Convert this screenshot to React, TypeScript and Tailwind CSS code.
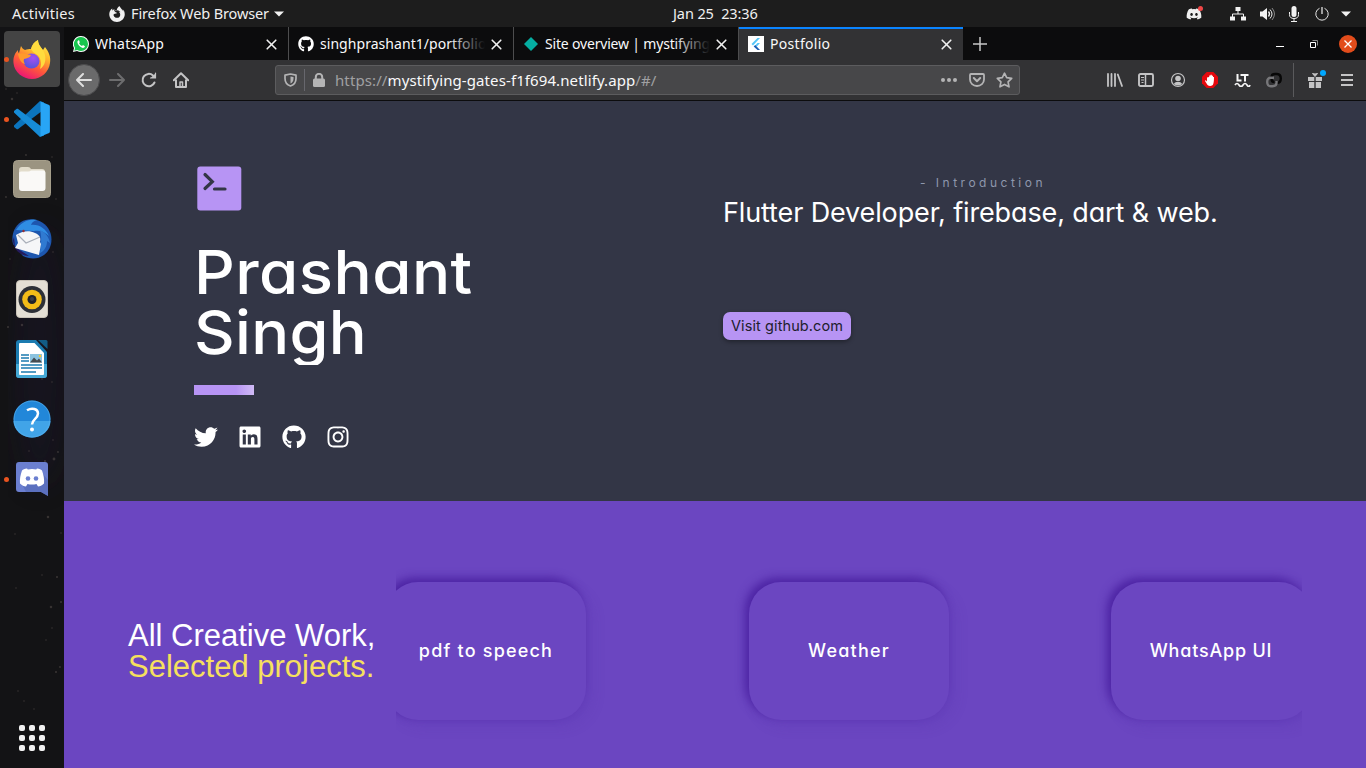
import React from "react";
import { FaGithub, FaInstagram, FaLinkedin, FaTwitter, FaDiscord } from "react-icons/fa";
import { SiFirefoxbrowser } from "react-icons/si";

type IconProps = { className?: string };

function CloseIcon({ className = "" }: IconProps) {
  return (
    <svg className={className} width="11" height="11" viewBox="0 0 11 11" stroke="currentColor" strokeWidth="1.6" strokeLinecap="round">
      <path d="M1.2 1.2l8.6 8.6M9.8 1.2L1.2 9.8" />
    </svg>
  );
}

function FirefoxLogo() {
  return (
    <svg width="38" height="39" viewBox="0 0 38 39">
      <defs>
        <linearGradient id="ffx" x1="0.8" y1="0" x2="0.3" y2="1">
          <stop offset="0" stopColor="#fff14a" />
          <stop offset="0.35" stopColor="#ffb52c" />
          <stop offset="0.65" stopColor="#ff5a3a" />
          <stop offset="1" stopColor="#ea1178" />
        </linearGradient>
        <radialGradient id="ffg" cx="0.6" cy="0.3" r="0.8">
          <stop offset="0" stopColor="#a64ff0" />
          <stop offset="1" stopColor="#4a56d8" />
        </radialGradient>
      </defs>
      <path d="M8 6c1 2 2 3 4 4 2-1 4-1 6-1 1-4 3-7 7-9 0 5 3 7 5 10l2-3c4 5 6 10 5 16-1 9-9 16-18 16S1 32 .5 23C0 17 2 13 5 10c0 2 0 2 1 3z" fill="url(#ffx)" />
      <path d="M18 9c1-4 3-7 7-9 0 5 4 8 6 12 3 7 1 14-4 17 2-6 1-12-4-15-2-1-4-3-5-5z" fill="#ffdc3e" />
      <ellipse cx="18.500" cy="21" rx="8" ry="7.500" fill="url(#ffg)" />
      <path d="M5 14c4-2 9 0 13 1-1 3-4 3-7 4-1 2 0 3 1 5-4-1-6-5-7-10z" fill="#ff9a2b" />
    </svg>
  );
}

function VsCodeLogo() {
  return (
    <svg width="36" height="36" viewBox="0 0 36 36">
      <path d="M26 0L0 24.5c-.4.5-.3 1 0 1.500L2.500 28c.5.400 1 .4 1.600 0L30 8.500V1.500z" fill="#0b74bd" />
      <path d="M26 36L0 11.500c-.4-.5-.3-1 0-1.500L2.500 8c.5-.4 1-.4 1.600 0L30 27.500v7z" fill="#168bd6" />
      <path d="M26.500 35.600V.4l8 3.300c1 .4 1.400 1 1.400 2v24.600c0 1-.4 1.600-1.400 2z" fill="#28a5f5" />
    </svg>
  );
}

function FilesLogo() {
  return (
    <svg width="38" height="38" viewBox="0 0 38 38">
      <rect x=".5" y=".5" width="37" height="37" rx="4" fill="#9b9481" stroke="#a59e8a" />
      <path d="M6 10q0-3 3-3h6q2 0 3 2h11q3 0 3 3v8H6z" fill="#e2dccb" />
      <path d="M6 13q0-1.500 2-1.500h7q2 0 3-1h12q2.500 0 2.500 2.500v15q0 3-3 3h-20.500q-3 0-3-3z" fill="#faf9f7" />
    </svg>
  );
}

function ThunderbirdLogo() {
  return (
    <svg width="40" height="40" viewBox="0 0 40 40">
      <path d="M9 3C17-2 30 0 36 9c6 9 4 21-4 27-7 5-15 4-21 1L1 25C-1 16 2 8 9 3z" fill="#1d56ae" />
      <path d="M4 11C9 3 18-1 25 1c-3 1-5 2-6 5 8-1 15 4 18 11-5-5-10-6-15-5z" fill="#2f8de4" />
      <path d="M28 11c5 2 9 7 10 13l-3-2c0 6-3 10-7 12 1-8 2-15 0-23z" fill="#307ad1" />
      <path d="M2 18L3 28l14 9c-9 0-16-7-16-16z" fill="#241a5c" />
      <path d="M4 16c6-4 13-5 19-2 5 2 6 5 5 9l1 2-2 11L3 29l3-5z" fill="#f5f6f8" />
      <path d="M6 16l8 8 14-6" stroke="#a9afb9" strokeWidth="1.200" fill="none" />
      <circle cx="11.500" cy="12" r="1.200" fill="#9b3030" />
    </svg>
  );
}

function RhythmboxLogo() {
  return (
    <svg width="32" height="38" viewBox="0 0 32 38">
      <rect x=".5" y=".5" width="31" height="37" rx="3.500" fill="#e4dfd5" stroke="#c9c3b8" />
      <circle cx="16" cy="19.500" r="13.500" fill="#2d3037" />
      <circle cx="16" cy="19.500" r="9.800" fill="#f4bd18" />
      <circle cx="16" cy="19.500" r="4.500" fill="#20232a" />
      <circle cx="16" cy="19" r="2" fill="#3a3e48" />
    </svg>
  );
}

function WriterLogo() {
  return (
    <svg width="32" height="38" viewBox="0 0 32 38">
      <path d="M3 0h17l11 12v23q0 3-3 3H3q-3 0-3-3V3q0-3 3-3z" fill="#1b7bb0" />
      <path d="M0 24h31v11q0 3-3 3H3q-3 0-3-3z" fill="#45a9d6" />
      <path d="M22 0h8q1.500 0 1.500 1.500V9z" fill="#125c86" />
      <path d="M3 4q0-1 1-1h14.500L28 13v21q0 1-1 1H4q-1 0-1-1z" fill="#fff" />
      <path d="M5 15h8M5 18h8M5 21h8M5 25h21M5 28h21M5 32h15" stroke="#1b7bb0" strokeWidth="1.400" />
      <rect x="14" y="14" width="12" height="8.500" fill="#8bc3df" />
      <path d="M14 22.500l4-5 3 3 2-2 3 4z" fill="#454b50" />
      <circle cx="24" cy="16" r="1.200" fill="#f5c930" />
    </svg>
  );
}

function HelpLogo() {
  return (
    <svg width="38" height="38" viewBox="0 0 38 38">
      <circle cx="19" cy="19" r="18.500" fill="#2287d9" />
      <path d="M.5 21h37a18.500 16.500 0 0 1-37 0z" fill="#41a4e8" />
      <circle cx="19" cy="19" r="18" fill="none" stroke="#5bb3ec" strokeOpacity=".6" />
      <path d="M14 10.300c5-3 11-1.500 11 3.300 0 5-6 5.500-6 11" fill="none" stroke="#fff" strokeWidth="2.500" />
      <circle cx="19" cy="29.500" r="2" fill="#fff" />
    </svg>
  );
}

function DiscordLogo() {
  return (
    <svg width="32" height="35" viewBox="0 0 32 35">
      <path d="M3 0h26q3 0 3 3v31l-7-4H3q-3 0-3-3V3q0-3 3-3z" fill="#6b7fd0" />
      <path d="M6 22l4 8h15l7 4V18L27 12z" fill="#5469b8" opacity=".7" />
      <path d="M11 6.500c-2.500 0-4 1-5 2-1.500 4-2.500 9-2 13 2 2 4 3 6 3l1.500-2.500q4.500 1 9 0L22 24.500c2 0 4-1 6-3 .5-4-.5-9-2-13-1-1-2.500-2-5-2l-.8 1q-4.200-.8-8.400 0z" fill="#fff" />
      <circle cx="12" cy="16.500" r="2.300" fill="#6b7fd0" />
      <circle cx="20" cy="16.500" r="2.300" fill="#6b7fd0" />
    </svg>
  );
}

function DockItem({ children, running = false, active = false }: { children: React.ReactNode; running?: boolean; active?: boolean }) {
  return (
    <div className="relative flex h-[60px] w-16 items-center justify-center">
      {running && <span className="absolute left-1 top-[27.5px] z-10 size-[5px] rounded-full bg-[#e95420]" />}
      <div className={active ? "flex size-14 items-center justify-center rounded-[4px] bg-[#444444]" : "flex size-14 items-center justify-center"}>{children}</div>
    </div>
  );
}

const stars = [
  [27, 6, 1.2], [6, 62, 1], [12, 72, 1.6], [17, 66, 1], [52, 130, 1], [26, 128, 1.2], [6, 170, 1.2], [56, 172, 1], [10, 232, 1],
  [53, 225, 1], [8, 300, 1.4], [22, 298, 1.6], [52, 355, 1], [42, 352, 1], [53, 413, 1], [58, 425, 1.2], [45, 434, 1.4], [54, 432, 1.8], [29, 424, 1],
  [48, 490, 1.6], [15, 507, 1], [61, 506, 1], [57, 550, 1.4], [42, 548, 1], [16, 561, 1], [61, 575, 1.4], [51, 580, 1.6], [52, 601, 1], [46, 613, 1],
  [60, 640, 1.2], [56, 645, 1.4], [18, 664, 1], [24, 674, 1], [34, 682, 1],
];

function Dock() {
  return (
    <aside className="relative flex w-16 shrink-0 flex-col overflow-hidden bg-[#131315] pt-[2px]">
      <svg className="absolute left-0 top-0" width="64" height="741">
        <defs>
          <filter id="haze"><feGaussianBlur stdDeviation="14" /></filter>
        </defs>
        <ellipse cx="40" cy="330" rx="26" ry="130" fill="#1a1830" opacity=".35" filter="url(#haze)" />
        {stars.map(([x, y, r]) => (
          <circle key={`${x}-${y}`} cx={x} cy={y} r={r * 0.8} fill="#6d6460" opacity=".4" />
        ))}
      </svg>
      <DockItem running active><FirefoxLogo /></DockItem>
      <DockItem running><VsCodeLogo /></DockItem>
      <DockItem><FilesLogo /></DockItem>
      <DockItem><ThunderbirdLogo /></DockItem>
      <DockItem><RhythmboxLogo /></DockItem>
      <DockItem><WriterLogo /></DockItem>
      <DockItem><HelpLogo /></DockItem>
      <DockItem running><DiscordLogo /></DockItem>
      <div className="relative mt-auto mb-[17px] ml-[19px] grid w-[26px] grid-cols-3 gap-[4px]">
        {[0, 1, 2, 3, 4, 5, 6, 7, 8].map((i) => (
          <span key={i} className="size-[6px] rounded-[2px] bg-[#f2f2f2]" />
        ))}
      </div>
    </aside>
  );
}

function SystemBar() {
  return (
    <header className="flex h-[27px] shrink-0 items-center bg-[#1d1d1d] text-[14.5px] leading-[27px] text-[#f0f0f0]">
      <div className="flex w-[673px] items-center pl-3">
        <span className="w-[97px] tracking-[0.25px]">Activities</span>
        <SiFirefoxbrowser className="size-4" />
        <span className="ml-[6px] w-[139px] whitespace-nowrap tracking-[-0.12px]">Firefox Web Browser</span>
        <svg className="ml-1" width="10" height="6" viewBox="0 0 10 6"><path d="M0 .5h10L5 5.500z" fill="#f2f2f2" /></svg>
      </div>
      <div className="whitespace-pre tracking-[-0.1px]">Jan 25  23:36</div>
      <div className="ml-auto flex items-center justify-end pr-[15px]">
        <span className="relative mr-[28px]">
          <FaDiscord className="size-4" />
          <span className="absolute -right-[1px] top-0 size-[5px] rounded-full bg-[#f04747]" />
        </span>
        <svg className="mr-[14px]" width="16" height="14" viewBox="0 0 16 14" fill="#f2f2f2">
          <path d="M5.500 0h5v4h-5zM0 9.500h5v4H0zM11 9.500h5v4h-5z" />
          <path d="M8 4v3M2.500 10V7h11v3" stroke="#f2f2f2" fill="none" />
        </svg>
        <svg className="mr-[14px]" width="15" height="14" viewBox="0 0 15 14" fill="none" stroke="#f2f2f2">
          <path d="M0 4.500h2.500L7 1v12L2.500 9.500H0z" fill="#f2f2f2" stroke="none" />
          <path d="M8.500 4.500q2 2.500 0 5" strokeWidth="1.300" /><path d="M10 2.500q4 4.500 0 9" /><path d="M12 1q5 6 0 12" strokeOpacity=".5" />
        </svg>
        <svg className="mr-[16px]" width="10" height="16" viewBox="0 0 10 16" fill="none" stroke="#f2f2f2">
          <rect x="2.500" y="0" width="5" height="11" rx="2.500" fill="#f2f2f2" stroke="none" />
          <path d="M.5 6v2.500q0 4 4.500 4t4.500-4V6M5 12.500V15M2 15.500h6" />
        </svg>
        <svg className="mr-3" width="14" height="14" viewBox="0 0 14 14" fill="none" stroke="#e4e4e4">
          <path d="M4.500 1.300a6.200 6.200 0 1 0 5 0" /><path d="M7 0v7" strokeWidth="1.300" />
        </svg>
        <svg width="10" height="6" viewBox="0 0 10 6"><path d="M0 .5h10L5 5.500z" fill="#f2f2f2" /></svg>
      </div>
    </header>
  );
}

function Tab({ icon, title, faded = false, active = false, titleClass = "" }: { icon: React.ReactNode; title: string; faded?: boolean; active?: boolean; titleClass?: string }) {
  return (
    <div className={active ? "flex h-[33px] w-[224px] items-center border-t-2 border-[#0a84ff] bg-[#323234] pb-[1px] pl-[9px]" : "flex h-[33px] w-[225px] items-center border-r border-[#4d4d4e] pb-[1px] pl-[9px] pt-[2px]"}>
      <span className="flex size-4 shrink-0 items-center justify-center">{icon}</span>
      <span className={`relative ml-[6px] w-[165px] overflow-hidden whitespace-nowrap text-[14px] leading-5 text-[#f9f9fa] ${titleClass}`}>
        {title}
        {faded && <span className="absolute right-0 top-0 h-5 w-9 bg-gradient-to-r from-transparent to-[#0c0c0d]" />}
      </span>
      <CloseIcon className="ml-[5.5px] shrink-0 text-[#f0f0f0]" />
    </div>
  );
}

function TabStrip() {
  return (
    <div className="flex h-[33px] shrink-0 items-center bg-[#0c0c0d]">
      <Tab
        title="WhatsApp"
        titleClass="tracking-[0.2px]"
        icon={
          <svg width="16" height="16" viewBox="0 0 16 16">
            <path d="M8 0a8 8 0 0 1 0 16q-2 0-4-1L0 16l1-4A8 8 0 0 1 8 0z" fill="#fff" />
            <path d="M8 1a7 7 0 0 1 0 14q-2 0-3.800-1l-2.900.8.8-2.900A7 7 0 0 1 8 1z" fill="#18c54e" />
            <path d="M5.500 4.200q-1.700 1-1 2.800c1 2.700 3 4.300 5.300 4.900q1.900.1 2.200-1.700l-2-1.100-1 1Q7 9.300 6 7.300l.8-1.100-.8-2z" fill="#fff" />
          </svg>
        }
      />
      <Tab title="singhprashant1/portfolio" faded titleClass="tracking-[0.05px]" icon={<FaGithub className="size-4 text-white" />} />
      <Tab
        title="Site overview | mystifying-gates"
        faded
        titleClass="tracking-[-0.18px]"
        icon={<svg width="16" height="16" viewBox="0 0 16 16"><path d="M8 1l7 7-7 7-7-7z" fill="#05ada1" /></svg>}
      />
      <Tab
        active
        title="Postfolio"
        titleClass="tracking-[0.3px]"
        icon={
          <svg width="16" height="16" viewBox="0 0 16 16">
            <path d="M0 0h16v16H0z" fill="#fff" />
            <path d="M9.500 2H12L5 9.500 3.500 8z" fill="#54c5f8" /><path d="M9.500 7H12l-3.200 3.400L7 9.800z" fill="#54c5f8" />
            <path d="M5.700 10.500L7.200 9l4.800 5H9.500z" fill="#1a5cb5" />
          </svg>
        }
      />
      <svg className="ml-[10px]" width="14" height="14" viewBox="0 0 14 14"><path d="M7 0v14M0 7h14" stroke="#c7c7c8" strokeWidth="1.500" /></svg>
      <div className="ml-auto flex items-center pr-[9px]">
        <span className="mr-[26px] mt-[5px] h-[1px] w-2 bg-white" />
        <svg className="mr-[21px]" width="8" height="8" viewBox="0 0 8 8" fill="none"><path d="M.5 2.500h5v5h-5z" stroke="#fff" /><path d="M2.500.5h5v5" stroke="#8a8a8a" /></svg>
        <span className="flex size-[18px] items-center justify-center rounded-full bg-[#e24c1b] text-white">
          <svg width="8" height="8" viewBox="0 0 8 8"><path d="M.5.5l7 7M7.500.5l-7 7" stroke="#fff" strokeWidth="1.300" /></svg>
        </span>
      </div>
    </div>
  );
}

function NavBar() {
  return (
    <div className="flex h-[41px] shrink-0 items-center border-b border-[#0c0c0d] bg-[#323234] text-[#c4c4c5]">
      <span className="ml-1 flex size-8 items-center justify-center rounded-full border border-[#4a4a4c] bg-[#6a6a6b]">
        <svg width="16" height="14" viewBox="0 0 16 14" fill="none" stroke="#dedede" strokeWidth="2" strokeLinecap="round" strokeLinejoin="round"><path d="M15 7H1M7 1L1 7l6 6" /></svg>
      </span>
      <svg className="ml-[9px]" width="16" height="14" viewBox="0 0 16 14" fill="none" stroke="#6d6d6e" strokeWidth="2" strokeLinecap="round" strokeLinejoin="round"><path d="M1 7h14M9 1l6 6-6 6" /></svg>
      <svg className="ml-4" width="16" height="16" viewBox="0 0 16 16" fill="none" stroke="currentColor" strokeWidth="2" strokeLinecap="round"><path d="M13.500 10.500A6.200 6.200 0 1 1 12 3.500l1.500 1.500" /><path d="M9.500 6H15V1z" fill="currentColor" stroke="none" /><path d="M14.500 1v5h-5" strokeWidth="1.200" /></svg>
      <svg className="ml-4" width="16" height="16" viewBox="0 0 16 16" fill="none" stroke="currentColor" strokeWidth="2" strokeLinejoin="round"><path d="M.8 8.300L8 1.200l7.200 7.100" strokeLinecap="round" /><path d="M3 7.500V15h10V7.500" /><path d="M7 15v-5h2.500v5" strokeWidth="1.500" /></svg>
      <div className="ml-[86px] flex h-[30px] w-[745px] items-center rounded-[3px] border border-[#5c5c5e] bg-[#474749]">
        <svg className="ml-2" width="13" height="14" viewBox="0 0 13 14" fill="none"><path d="M6.500 1l5.500 1.200v3.300c0 4-2.500 6.500-5.500 7.500C3.500 12 1 9.500 1 5.500V2.200z" stroke="#b4b4b5" strokeWidth="1.700" strokeLinejoin="round" /><path d="M6.500 3.500v7c2-1 3-2.500 3-5V4z" fill="#b4b4b5" /></svg>
        <span className="ml-[7px] h-[22px] w-px bg-[#67676d]" />
        <svg className="ml-2" width="12" height="14" viewBox="0 0 12 14"><path d="M0 7q0-1.500 1.500-1.500h9Q12 5.500 12 7v5.500q0 1.500-1.500 1.500h-9Q0 14 0 12.500z" fill="#b4b4b5" /><path d="M2.800 6V4a3.200 3.200 0 0 1 6.400 0v2" fill="none" stroke="#b4b4b5" strokeWidth="2" /></svg>
        <span className="ml-[10px] whitespace-nowrap text-[15px] leading-5 tracking-[0.1px] text-[#a0a0a2]">
          https://<span className="text-[#f9f9fa]">mystifying-gates-f1f694.netlify.app</span>/#/
        </span>
        <svg className="ml-auto" width="16" height="4" viewBox="0 0 16 4" fill="#b4b4b5"><circle cx="2" cy="2" r="2" /><circle cx="8" cy="2" r="2" /><circle cx="14" cy="2" r="2" /></svg>
        <svg className="ml-3" width="16" height="14" viewBox="0 0 16 14" fill="none" stroke="#b4b4b5" strokeLinecap="round" strokeLinejoin="round"><path d="M2 1h12q1 0 1 1v4.500a7 6.500 0 0 1-14 0V2q0-1 1-1z" strokeWidth="1.800" /><path d="M4.800 5L8 8.200 11.200 5" strokeWidth="2" /></svg>
        <svg className="ml-[11px] mr-[6px]" width="17" height="16" viewBox="0 0 17 16" fill="none" stroke="#b4b4b5" strokeWidth="1.700" strokeLinejoin="round"><path d="M8.500 1.200l2.200 4.500 5 .7-3.600 3.400.9 5-4.500-2.400L4 14.800l.9-5L1.300 6.400l5-.7z" /></svg>
      </div>
      <div className="ml-auto flex items-center">
        <svg width="16" height="14" viewBox="0 0 16 14" stroke="currentColor" strokeWidth="1.800" strokeLinecap="round"><path d="M1 1v12M4.500 1v12M8 1v12M10.800 1.500L15 13" /></svg>
        <svg className="ml-[15px]" width="16" height="14" viewBox="0 0 16 14" fill="none" stroke="currentColor"><rect x="1" y="1" width="14" height="12" rx="1.500" strokeWidth="1.900" /><path d="M7.500 1v12" strokeWidth="1.500" /><path d="M3 4.500h3M3 7h3M3.500 9.500h2" /></svg>
        <svg className="ml-4" width="16" height="16" viewBox="0 0 16 16" fill="none" stroke="currentColor"><circle cx="8" cy="8" r="6.500" strokeWidth="1.200" /><circle cx="8" cy="6.500" r="2.800" fill="currentColor" stroke="none" /><path d="M3.800 12q1.200-2 2.700-2h3q1.500 0 2.700 2-4.200 3-8.400 0z" fill="currentColor" stroke="none" /></svg>
        <svg className="ml-4" width="16" height="16" viewBox="0 0 16 16"><path d="M4.700 0h6.600L16 4.700v6.600L11.300 16H4.700L0 11.300V4.700z" fill="#e5080d" /><path d="M5 5.500v4L4 8.500q-1-.5-1 .5l2.500 4Q8 15 10.800 13q1.200-2 1.200-8h-1v2.500V3.700h-1.200V7 2.700H8.500V7 3.500H7.200v4V5z" fill="#fff" /></svg>
        <svg className="ml-4" width="17" height="14" viewBox="0 0 17 14" fill="none" stroke="#f6f6f6" strokeWidth="2"><path d="M3.500 1v6.500h4M6.500 2h8M11 1v7.500" /><path d="M1 12q2-3 4 0t4 0 4 0 3 0" strokeWidth="1.700" /></svg>
        <svg className="ml-[15px]" width="16" height="16" viewBox="0 0 16 16" fill="none" strokeWidth="2.400"><path d="M9 10.800h2q3.800 0 3.800-4.300T11 2H9Q5.500 2 5.500 5v2q0 3 3 3" stroke="#070707" /><path d="M8 5.700H5q-3.800 0-3.800 4.300T5 14.200h1.500Q10.500 14 10.500 11V9" stroke="#77777a" /></svg>
        <span className="ml-[11px] h-[34px] w-px bg-[#5a5a5c]" />
        <span className="relative ml-[14px]">
          <svg width="14" height="16" viewBox="0 0 14 16" fill="currentColor"><path d="M0 5h6.300v4H0zM7.700 5H14v4H7.700zM1 10h5.300v6H1zM7.700 10H13v6H7.700z" /><path d="M7 4.500L4.500 1.500 7 2l2.500-.5z" stroke="currentColor" /></svg>
          <span className="absolute -right-[4px] -top-[2px] size-[6px] rounded-full bg-[#00a8ff]" />
        </span>
        <svg className="ml-[19px] mr-[13px]" width="12" height="12" viewBox="0 0 12 12" stroke="currentColor" strokeWidth="2"><path d="M0 1h12M0 6h12M0 11h12" /></svg>
      </div>
    </div>
  );
}

function Intro() {
  return (
    <section className="flex h-[400px] shrink-0 bg-[#333646] pt-[65px] text-white [font-feature-settings:'cv11']">
      <div className="ml-[130px] w-[529px]">
        <svg className="ml-[3px]" width="45" height="45" viewBox="0 0 45 45">
          <rect x=".3" y=".5" width="44" height="44" rx="3" fill="#b794f4" />
          <path d="M8 8.500l7.300 7.200L8 22.500M17.500 23h10.500" fill="none" stroke="#333646" strokeWidth="3.200" strokeLinecap="round" />
        </svg>
        <h1 className="mt-[31px] h-[123px] overflow-hidden font-['Inter'] text-[60px] font-medium leading-[60px]">
          <span className="block w-[300px] origin-left scale-x-[1.06] tracking-[0.4px]">Prashant</span>
          <span className="block w-[300px] origin-left scale-x-[1.05] tracking-[0.3px]">Singh</span>
        </h1>
        <div className="mt-5 h-[10px] w-[60px] bg-gradient-to-r from-[#b794f4] from-70% to-[#d0bbf5]" />
        <div className="mt-[30px] flex items-center gap-5">
          <FaTwitter className="size-6" />
          <FaLinkedin className="size-6" />
          <FaGithub className="size-6" />
          <FaInstagram className="size-6" />
        </div>
      </div>
      <div className="w-[520px] pt-[8px] font-['Inter']">
        <p className="text-center text-[12px] leading-[18px] tracking-[3.5px] text-[#8f98ad]">- Introduction</p>
        <h2 className="whitespace-nowrap text-[27px] font-normal leading-[41px] tracking-[-0.13px]">Flutter Developer, firebase, dart &amp; web.</h2>
        <button className="mt-[79px] h-7 w-[128px] whitespace-nowrap rounded-[7px] bg-[#b794f4] text-[14.5px] leading-7 tracking-[0.1px] text-[#20202c] shadow-[0_2px_4px_rgba(0,0,0,0.35)]">Visit github.com</button>
      </div>
    </section>
  );
}

function ProjectCard({ title, titleClass }: { title: string; titleClass: string }) {
  return (
    <div className="flex h-[138px] w-[200px] shrink-0 items-center justify-center rounded-[32px] bg-[#6b46c1] pb-[1px] shadow-[-4px_-4px_10px_#4c23a3,6px_6px_14px_rgba(83,49,170,0.2)]">
      <span className={`whitespace-nowrap font-['Inter'] text-[18px] font-medium text-white [font-feature-settings:'cv11'] ${titleClass}`}>{title}</span>
    </div>
  );
}

function Projects() {
  return (
    <section className="flex flex-1 bg-[#6b46c1]">
      <h2 className="ml-16 mt-[119px] w-[268px] shrink-0 whitespace-nowrap font-['Liberation_Sans'] text-[31px] leading-[31px] text-white">
        All Creative Work,
        <span className="block text-[#f6e05e]">Selected projects.</span>
      </h2>
      <div className="flex w-[906px] gap-[162px] overflow-hidden pt-[81px]">
        <div className="-ml-[10px] mr-px"><ProjectCard title="pdf to speech" titleClass="tracking-[1.2px]" /></div>
        <ProjectCard title="Weather" titleClass="tracking-[1.2px]" />
        <ProjectCard title="WhatsApp UI" titleClass="tracking-[0.8px]" />
      </div>
    </section>
  );
}

export default function App() {
  return (
    <div className="flex h-[768px] w-[1366px] flex-col overflow-hidden bg-[#1d1d1d] font-['Noto_Sans',sans-serif]">
      <SystemBar />
      <div className="flex min-h-0 flex-1">
        <Dock />
        <main className="flex min-w-0 flex-1 flex-col">
          <TabStrip />
          <NavBar />
          <Intro />
          <Projects />
        </main>
      </div>
    </div>
  );
}
